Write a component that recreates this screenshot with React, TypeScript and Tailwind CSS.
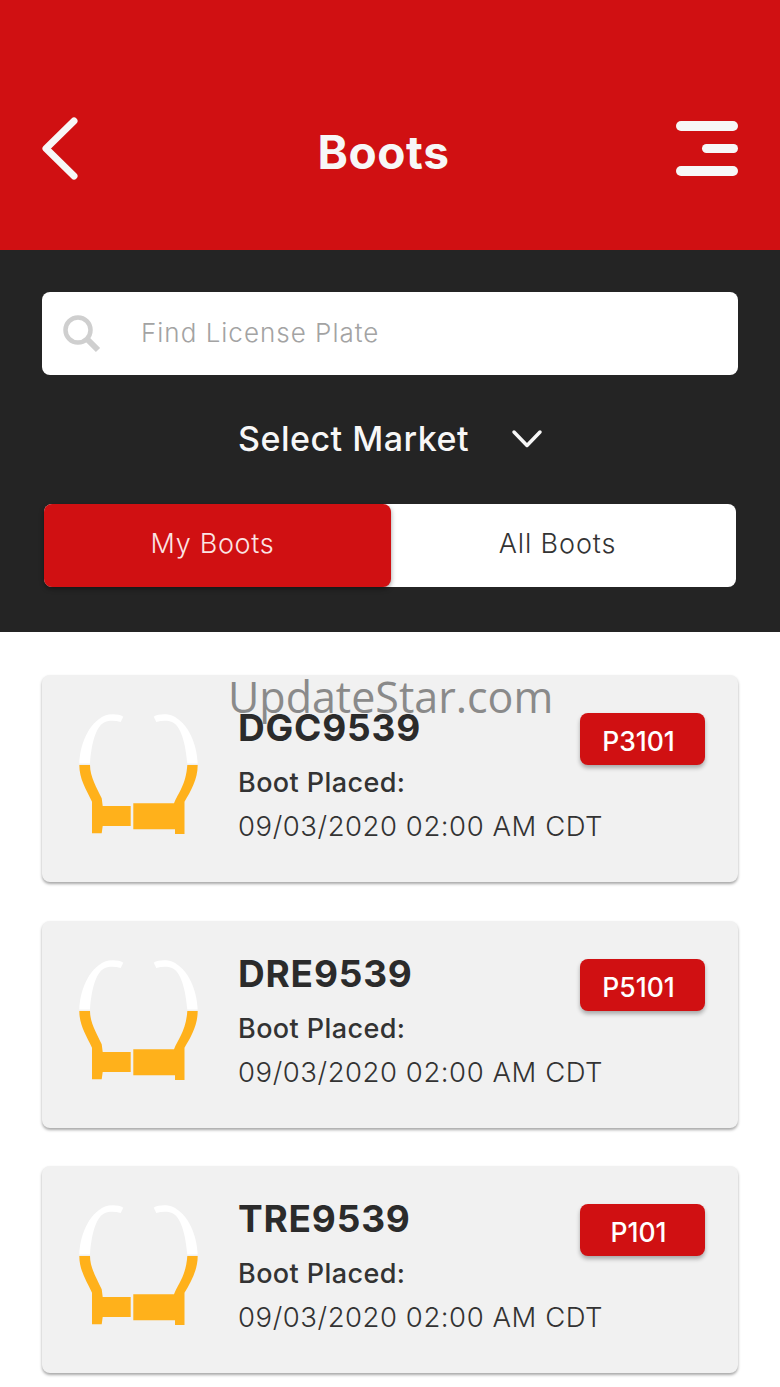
const font = "font-['Inter','Liberation_Sans',sans-serif]";

function BootIcon() {
  return (
    <svg width="120" height="123" viewBox="0 0 120 123" className="shrink-0">
      <path d="M0.3 50.5C1 32 9 10 26 2.5C32 0.5 40 1 44.3 3.7L41.7 8.9C36 7.5 30 7.5 26 9C17 13 12.5 30 11 50.5Z" fill="#ffffff" />
      <path d="M118.7 50.5C118 32 110 10 93 2.5C87 0.5 79 1 74.7 3.7L77.3 8.9C83 7.5 89 7.5 93 9C102 13 106.5 30 108.3 50.5Z" fill="#ffffff" />
      <path
        d="M0.3 52L11 52C11 64 18 75 22.7 85.3L23.7 93L51.7 93L51.7 113L23.7 113L22.7 120.3L13 120.3L13 88.7C7 76 0.3 66 0.3 52Z"
        fill="#ffb11b"
      />
      <path
        d="M54.3 90.3L95 90.3C99 80 107 72 108.3 52L118.7 52C118.7 66 112 78 105.5 88.7L105.5 121L96 121L96 116.3L54.3 116.3Z"
        fill="#ffb11b"
      />
    </svg>
  );
}

function Card({ plate, code }: { plate: string; code: string }) {
  return (
    <div className="flex h-[207px] w-[696px] rounded-lg bg-[#f1f1f1] pl-[37px] pr-[33px] pt-[38px] shadow-[0_2px_3px_rgba(0,0,0,0.35)]">
      <BootIcon />
      <div className="ml-[39px] min-w-0 flex-1 -mt-[31px]">
        <div className="h-[83px] pt-[24px] text-[37px] font-bold leading-[44px] tracking-[0.8px] text-[#2b2b2b]">
          {plate}
        </div>
        <div className="h-[36px] text-[27px] font-medium leading-[36px] tracking-[0.4px] text-[#333333]">
          Boot Placed:
        </div>
        <div className="mt-[7px] whitespace-nowrap text-[27.5px] font-light leading-[36px] tracking-[0.55px] text-[#333333]">
          09/03/2020 02:00 AM CDT
        </div>
      </div>
      <div className="flex h-[52px] w-[125px] shrink-0 items-center justify-center rounded-lg bg-[#d01012] pr-[8px] pt-[6px] text-[26.5px] font-medium text-white shadow-[0_3px_4px_rgba(0,0,0,0.3)]">
        {code}
      </div>
    </div>
  );
}

export default function App() {
  return (
    <div className={`relative h-[1387px] w-[780px] overflow-hidden bg-white ${font}`}>
      <header className="flex h-[250px] items-start justify-between bg-[#d01012] pl-[42px] pr-[42px] pt-[117px]">
        <svg width="36" height="63" viewBox="0 0 36 63" fill="none">
          <path d="M32 4L4 31.5L32 59" stroke="#f7f7f7" strokeWidth="7" strokeLinecap="round" strokeLinejoin="round" />
        </svg>
        <h1 className="ml-[13px] mt-[5px] text-[46px] font-bold leading-[60px] tracking-[0.6px] text-[#f7f7f7]">Boots</h1>
        <div className="mt-[4px] flex w-[62px] flex-col items-end gap-[13px]">
          <div className="h-[10px] w-[62px] rounded-full bg-[#f7f7f7]" />
          <div className="h-[9px] w-[36px] rounded-full bg-[#f7f7f7]" />
          <div className="h-[10px] w-[62px] rounded-full bg-[#f7f7f7]" />
        </div>
      </header>

      <section className="flex h-[382px] flex-col bg-[#242424] px-[42px] pt-[42px]">
        <div className="flex h-[83px] items-center rounded-lg bg-white pb-[3px] pl-[21px]">
          <svg width="38" height="38" viewBox="0 0 38 38" fill="none" className="mt-[3px]">
            <circle cx="15" cy="15" r="12.5" stroke="#cfcfcf" strokeWidth="4.5" />
            <path d="M24 24L35 35" stroke="#cfcfcf" strokeWidth="6" />
          </svg>
          <span className="ml-[40px] text-[26px] font-light tracking-[1px] text-[#a3a3a3]">Find License Plate</span>
        </div>
        <div className="mt-[40px] flex h-[48px] items-center">
          <span className="ml-[196px] text-[34px] font-medium leading-[48px] tracking-[0.5px] text-[#f7f7f7]">Select Market</span>
          <svg width="32" height="20" viewBox="0 0 32 20" fill="none" className="ml-[42px]">
            <path d="M3 3L16 16.5L29 3" stroke="#f7f7f7" strokeWidth="3.5" strokeLinecap="round" strokeLinejoin="round" />
          </svg>
        </div>
        <div className="mx-[2px] mt-[41px] flex h-[83px] rounded-lg bg-white">
          <div className="flex w-[347px] items-center justify-center rounded-lg bg-[#d01012] pb-[3px] pr-[10px] text-[27px] font-light tracking-[0.7px] text-[#fbe4e4] shadow-[0_2px_5px_rgba(0,0,0,0.4)]">
            My Boots
          </div>
          <div className="flex flex-1 items-center justify-center pb-[3px] pr-[12px] text-[27px] font-light tracking-[0.9px] text-[#333333]">
            All Boots
          </div>
        </div>
      </section>

      <main className="flex flex-col gap-[38.5px] pl-[42px] pt-[43px]">
        <Card plate="DGC9539" code="P3101" />
        <Card plate="DRE9539" code="P5101" />
        <Card plate="TRE9539" code="P101" />
      </main>

      <div className="absolute left-[228px] top-[667px] font-['Open_Sans',sans-serif] text-[43px] leading-[60px] text-[#8a8a8a]">
        UpdateStar.com
      </div>
    </div>
  );
}
